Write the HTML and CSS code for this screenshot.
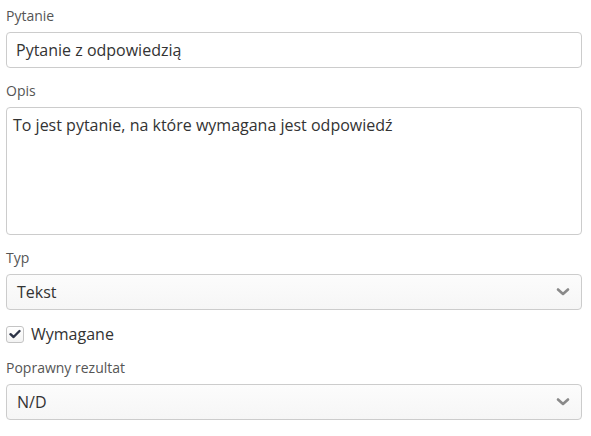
FILE: index.html
```html
<!DOCTYPE html>
<html lang="pl">
<head>
<meta charset="utf-8">
<link rel="stylesheet" href="styles.css">
</head>
<body>
<form class="form">
  <div class="field">
    <label class="label">Pytanie</label>
    <div class="input">Pytanie z odpowiedzią</div>
  </div>
  <div class="field">
    <label class="label">Opis</label>
    <div class="textarea">To jest pytanie, na które wymagana jest odpowiedź</div>
  </div>
  <div class="field">
    <label class="label">Typ</label>
    <div class="select">
      <span>Tekst</span>
      <svg class="chev" width="14" height="10" viewBox="0 0 14 10"><path d="M2 2.5 L7 7 L12 2.5" fill="none" stroke="#8a8a8a" stroke-width="2.6" stroke-linecap="round" stroke-linejoin="round"/></svg>
    </div>
  </div>
  <div class="check-row">
    <span class="checkbox"><svg width="12" height="10" viewBox="0 0 12 10"><path d="M1.5 5.2 L4.6 8 L10.5 2" fill="none" stroke="#2b3245" stroke-width="2.4" stroke-linecap="round" stroke-linejoin="round"/></svg></span>
    <span class="check-label">Wymagane</span>
  </div>
  <div class="field">
    <label class="label">Poprawny rezultat</label>
    <div class="select">
      <span>N/D</span>
      <svg class="chev" width="14" height="10" viewBox="0 0 14 10"><path d="M2 2.5 L7 7 L12 2.5" fill="none" stroke="#8a8a8a" stroke-width="2.6" stroke-linecap="round" stroke-linejoin="round"/></svg>
    </div>
  </div>
</form>
</body>
</html>
```
FILE: styles.css
```css
* { box-sizing: border-box; }
html, body { margin: 0; padding: 0; background: #fff; }
body {
  font-family: "Open Sans", "Liberation Sans", sans-serif;
  color: #333;
}
.form {
  width: 576px;
  margin-left: 6px;
  padding-top: 6px;
  display: flex;
  flex-direction: column;
}
.field {
  display: flex;
  flex-direction: column;
  margin-bottom: 13px;
}
.label {
  font-size: 14px;
  line-height: 20px;
  color: #555;
  margin-bottom: 6px;
}
.input {
  height: 36px;
  border: 1px solid #ccc;
  border-radius: 4px;
  background: #fff;
  font-size: 16px;
  line-height: 34px;
  padding: 0 9px;
}
.textarea {
  height: 128px;
  border: 1px solid #ccc;
  border-radius: 4px;
  background: #fff;
  font-size: 16px;
  line-height: 22px;
  padding: 6px 6px;
}
.select {
  height: 36px;
  border: 1px solid #ccc;
  border-radius: 4px;
  background: linear-gradient(#fcfcfc, #f6f6f6);
  font-size: 16px;
  display: flex;
  align-items: center;
  justify-content: space-between;
  padding: 0 11px 0 10px;
}
.chev { display: block; }
.check-row {
  display: flex;
  align-items: center;
  gap: 7px;
  height: 24px;
  margin-top: -1px;
  margin-bottom: 12px;
}
.checkbox {
  width: 18px;
  height: 17px;
  border: 1px solid #c4c4c4;
  border-radius: 3px;
  background: linear-gradient(#fff, #f3f3f3);
  display: flex;
  align-items: center;
  justify-content: center;
}
.checkbox svg { display: block; }
.check-label {
  font-size: 16px;
  color: #333;
}
```
